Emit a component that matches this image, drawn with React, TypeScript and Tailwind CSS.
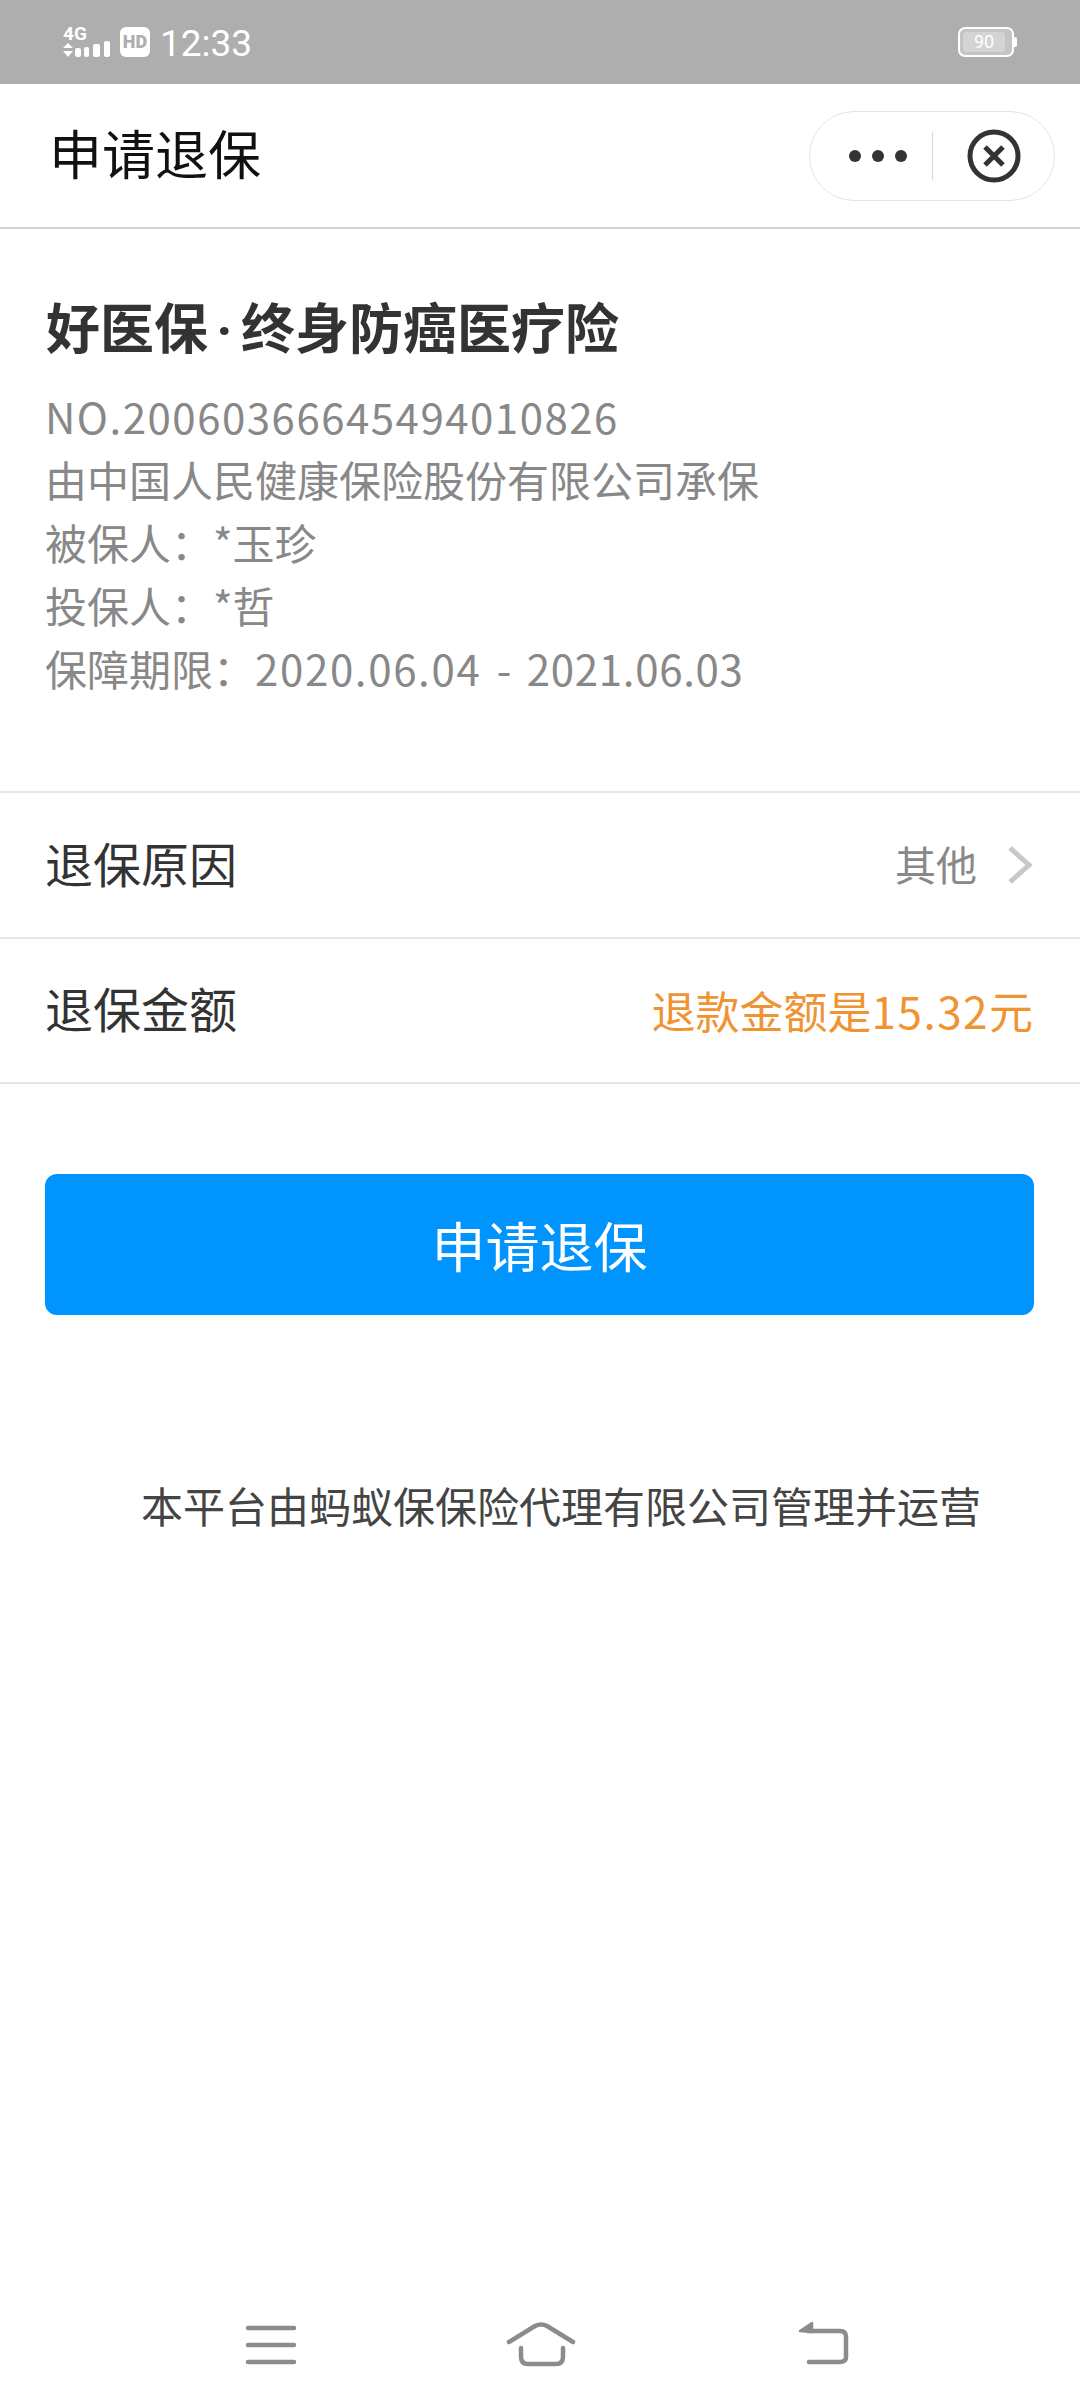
const cjk = "font-['Noto_Sans_CJK_SC','Noto_Sans',sans-serif]";

function StatusBar() {
  return (
    <div className="h-[84px] bg-[#aeaeae] flex items-center justify-between pl-[63px] pr-[63px] text-white">
      <div className="flex items-center">
        <svg width="47" height="40" viewBox="0 -4 47 40" fill="white" className="mr-[10px]">
          <text x="0" y="14" fontSize="19" fontWeight="700" fontFamily="Roboto, sans-serif">4G</text>
          <path d="M5 17l5 5H0zM5 31l-5-6h10z" />
          <rect x="12" y="22" width="6" height="9" rx="2" />
          <rect x="21" y="21" width="5" height="10" rx="2" />
          <rect x="30" y="18" width="7" height="13" rx="2" />
          <rect x="41" y="15" width="6" height="16" rx="2" />
        </svg>
        <div className="w-[30px] h-[30px] rounded-[6px] bg-white flex items-center justify-center text-[#aeaeae] text-[18px] font-black leading-none font-['Roboto',sans-serif] mr-[10px]">
          HD
        </div>
        <span className="text-[37px] leading-none mt-[3px] font-['Roboto',sans-serif]">12:33</span>
      </div>
      <div className="flex items-center">
        <div className="w-[56px] h-[30px] border-[2px] border-white rounded-[7px] p-[3px] bg-[#c4c4c4]">
          <div className="w-[42px] h-full rounded-[4px] bg-[#d4d4d4] flex items-center justify-center text-[18px] leading-none font-['Roboto',sans-serif]">
            90
          </div>
        </div>
        <div className="w-[3px] h-[10px] bg-white rounded-r-[2px]" />
      </div>
    </div>
  );
}

function NavBar() {
  return (
    <div className="h-[145px] border-b-[2px] border-[#d4d4d4] flex items-center justify-between pl-[49px] pr-[25px] bg-white">
      <h1 className="text-[53px] leading-none pb-[6px] text-[#111]">申请退保</h1>
      <div className="w-[246px] h-[90px] rounded-full border-[1.5px] border-[#e4e4e4] flex items-center">
        <div className="flex-1 flex justify-end gap-[11px] pr-[25px]">
          <span className="w-[12px] h-[12px] rounded-full bg-[#333]" />
          <span className="w-[12px] h-[12px] rounded-full bg-[#333]" />
          <span className="w-[12px] h-[12px] rounded-full bg-[#333]" />
        </div>
        <div className="w-[1px] h-[48px] bg-[#d8d8d8]" />
        <div className="w-[121px] flex justify-center">
          <svg width="54" height="54" viewBox="0 0 54 54" fill="none" stroke="#333">
            <circle cx="27" cy="27" r="24" strokeWidth="5" />
            <path d="M18 18l18 18M36 18L18 36" strokeWidth="5" />
          </svg>
        </div>
      </div>
    </div>
  );
}

function Row({ label, children }: { label: string; children: React.ReactNode }) {
  return (
    <div className="h-[145.5px] border-b-[2px] border-[#e6e6e6] flex items-center justify-between pl-[45px] pr-[47px]">
      <span className="text-[48px] leading-none pb-[6px] text-[#333]">{label}</span>
      {children}
    </div>
  );
}

function BottomBar() {
  return (
    <div className="absolute left-0 right-0 bottom-0 h-[118px]">
      <svg width="1080" height="118" viewBox="0 0 1080 118" fill="none" stroke="#8c8c8c" strokeWidth="4.500" strokeLinecap="round" strokeLinejoin="round">
        <path d="M248 38h46M248 55h46M248 72h46" />
        <path d="M509 52l26-16q6-3 12 0l26 16" />
        <path d="M521 58v9q0 7 7 7h28q7 0 7-7v-9" />
        <path d="M808 41h32q6 0 6 6v20q0 5-6 5h-31" />
        <path d="M800 41l12-8v9z" fill="#8c8c8c" strokeWidth="2.500" />
      </svg>
    </div>
  );
}

export default function App() {
  return (
    <div className={`relative w-[1080px] h-[2408px] overflow-hidden bg-white ${cjk}`}>
      <StatusBar />
      <NavBar />

      <div className="h-[564px] px-[45px] pt-[59px] border-b-[2px] border-[#e6e6e6]">
        <h2 className="text-[54px] leading-[76px] font-bold text-[#333] mb-[15px] pl-[1px]">
          好医保<span className="inline-block w-[33px] text-center font-['Roboto',sans-serif]">·</span>终身防癌医疗险
        </h2>
        <div className="text-[42px] leading-[63px] text-[#888]">
          <p className="tracking-[1.5px]">NO.20060366645494010826</p>
          <p>由中国人民健康保险股份有限公司承保</p>
          <p>被保人：*玉珍</p>
          <p>投保人：*哲</p>
          <p>
            保障期限：<span className="tracking-[1.65px]">2020.06.04</span>
            <span className="px-[6px]"> - </span>
            <span className="tracking-[0.7px]">2021.06.03</span>
          </p>
        </div>
      </div>

      <Row label="退保原因">
        <div className="flex items-center">
          <span className="text-[41px] leading-none pb-[2px] text-[#888]">其他</span>
          <svg width="26" height="40" viewBox="0 0 26 40" fill="none" stroke="#c8c8c8" strokeWidth="5" className="ml-[30px]">
            <path d="M3 3l19 17L3 37" />
          </svg>
        </div>
      </Row>
      <Row label="退保金额">
        <span className="text-[44px] leading-none text-[#f09433]">
          退款金额是<span className="tracking-[1.5px]">15.32</span>元
        </span>
      </Row>

      <div className="pl-[45px] pr-[46px] pt-[90px]">
        <button className="w-full h-[141px] rounded-[12px] bg-[#0094ff] text-white text-[54px]">申请退保</button>
      </div>

      <p className="mt-[169px] pl-[42px] text-center text-[42px] leading-none text-[#444]">本平台由蚂蚁保保险代理有限公司管理并运营</p>

      <BottomBar />
    </div>
  );
}
